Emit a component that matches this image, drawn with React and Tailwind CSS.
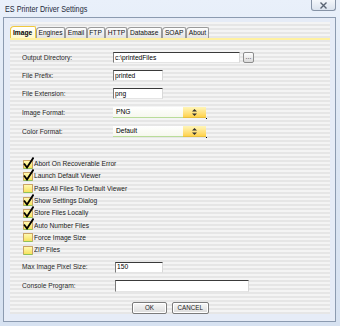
import React from "react";

const tabs = [
  { name: "Image", w: 26 },
  { name: "Engines", w: 29 },
  { name: "Email", w: 22 },
  { name: "FTP", w: 18 },
  { name: "HTTP", w: 22 },
  { name: "Database", w: 35 },
  { name: "SOAP", w: 24 },
  { name: "About", w: 23 },
];

const checks = [
  { label: "Abort On Recoverable Error", on: true },
  { label: "Launch Default Viewer", on: true },
  { label: "Pass All Files To Default Viewer", on: false },
  { label: "Show Settings Dialog", on: true },
  { label: "Store Files Locally", on: true },
  { label: "Auto Number Files", on: true },
  { label: "Force Image Size", on: false },
  { label: "ZIP Files", on: false },
];

// the screenshot is squeezed horizontally, so text is narrowed a bit
const T = ({ children, center }) => (
  <span className={`inline-block whitespace-nowrap scale-x-[0.83] ${center ? "origin-center" : "origin-left"}`}>
    {children}
  </span>
);

const TextBox = ({ value, className }) => (
  <div
    className={`h-[11px] bg-white border-t border-l border-t-[#3a3a3a] border-l-[#7a7a7a] border-r border-b border-r-[#d8d8d8] border-b-[#e4e4e4] flex items-center pl-[1px] text-[8px] text-black leading-none overflow-hidden ${className}`}
  >
    <T>{value}</T>
  </div>
);

const Select = ({ value }) => (
  <div className="h-[11px] w-[93px] flex relative">
    <div className="flex-1 bg-gradient-to-b from-white to-[#f6f8ee] border-b border-b-[#b9dc9a] flex items-center pl-[3px] text-[8px] leading-none text-black">
      <T>{value}</T>
    </div>
    <div className="w-[23px] bg-gradient-to-b from-[#fff6b8] to-[#ffd24a] border-b border-b-[#e8c040] flex items-center justify-center">
      <svg width="5" height="7" viewBox="0 0 5 7">
        <path d="M2.5 0 L5 2.6 L0 2.6 Z M2.5 7 L5 4.4 L0 4.4 Z" fill="#333" />
      </svg>
    </div>
    <div className="absolute right-[-1px] bottom-[-1px] w-[1.5px] h-[1.5px] bg-black" />
  </div>
);

const CheckBox = ({ on }) => (
  <div className="relative w-[10px] h-[9px] shrink-0">
    <div className="absolute inset-0 bg-gradient-to-b from-[#fff9b0] to-[#f7e25a] border border-[#c9a266] border-b-[#8fc25a] rounded-[1px]" />
    {on && (
      <svg className="absolute left-[0px] top-[-3px]" width="11" height="12" viewBox="0 0 11 12">
        <path d="M1 6.5 L4 10.5 L10.5 0.5" fill="none" stroke="#000" strokeWidth="1.8" strokeLinejoin="miter" />
      </svg>
    )}
  </div>
);

const Button = ({ children, w }) => (
  <div
    className={`h-[12px] ${w} rounded-[2px] border border-[#7b7b7b] bg-gradient-to-b from-[#f8f8f8] to-[#dcdcdc] shadow-[inset_0_0_0_1px_#ffffff] flex items-center justify-center text-[7.5px] leading-none text-[#222]`}
  >
    <T center>{children}</T>
  </div>
);

export default function App() {
  return (
    <div className="w-[340px] h-[326px] overflow-hidden bg-gradient-to-b from-[#e9f0fa] via-[#dbe5f3] to-[#d7e2f1] font-['Liberation_Sans',Arial,sans-serif] flex flex-col">
      {/* title bar */}
      <div className="h-[17px] flex items-start justify-between shrink-0">
        <div className="pl-[5px] pt-[4px] text-[9.5px] leading-none text-[#1e2a3a]">
          <span className="inline-block whitespace-nowrap origin-left scale-x-[0.76]">ES Printer Driver Settings</span>
        </div>
        <div className="mr-[4px] w-[25px] h-[11px] rounded-b-[3px] border border-t-0 border-[#8693a6] bg-gradient-to-b from-[#f4f7fb] to-[#dbe3ee] flex items-center justify-center">
          <svg width="9" height="7" viewBox="0 0 9 7">
            <path d="M1.5 0.5 L7.5 6.5 M7.5 0.5 L1.5 6.5" stroke="#5a6472" strokeWidth="1.4" />
          </svg>
        </div>
      </div>

      {/* client area */}
      <div className="mx-[3px] w-[333px] h-[305px] border border-[#8c9bb0] bg-[#e6ecf7] pl-[6px] pt-[4px] pr-[4px] pb-[7px] flex shrink-0">
        <div className="w-[320px] h-[292px] bg-[image:repeating-linear-gradient(to_bottom,#f4f4f4_0px,#f4f4f4_2.5px,#e6e6e6_2.5px,#e6e6e6_4px)] flex flex-col">
          {/* tabs */}
          <div className="mt-[5px] h-[11px] flex items-end">
            {tabs.map((t, i) =>
              i === 0 ? (
                <div
                  key={t.name}
                  style={{ width: t.w }}
                  className="h-[12px] rounded-tl-[4px] rounded-tr-[2px] border border-b-0 border-[#f0c83c] bg-gradient-to-b from-white to-[#fff8cc] flex items-center justify-center text-[8px] font-bold leading-none text-black"
                >
                  <T center>{t.name}</T>
                </div>
              ) : (
                <div
                  key={t.name}
                  style={{ width: t.w }}
                  className="h-[11px] rounded-tl-[4px] rounded-tr-[2px] border border-b-0 border-[#9a9a9a] bg-gradient-to-b from-[#fdfdfd] to-[#e2e2e2] flex items-center justify-center text-[8px] leading-none text-[#111]"
                >
                  <T center>{t.name}</T>
                </div>
              )
            )}
          </div>
          <div className="h-[2px] bg-[#fff1a0]" />

          {/* form */}
          <div className="ml-[12px] flex flex-col text-[8px] leading-none text-[#2a2a2a]">
            <div className="mt-[12px] h-[11px] flex items-center">
              <div className="w-[91px]"><T>Output Directory:</T></div>
              <TextBox value="c:\printedFiles" className="w-[127px]" />
              <div className="ml-[3px] w-[11px] h-[11px] rounded-[2px] border border-[#8d8d8d] bg-gradient-to-b from-white to-[#dadada] flex items-end justify-center pb-[2px] text-[7px] leading-none text-[#333]">
                ...
              </div>
            </div>
            <div className="mt-[7px] h-[11px] flex items-center">
              <div className="w-[91px]"><T>File Prefix:</T></div>
              <TextBox value="printed" className="w-[50px]" />
            </div>
            <div className="mt-[7px] h-[11px] flex items-center">
              <div className="w-[91px]"><T>File Extension:</T></div>
              <TextBox value="png" className="w-[50px]" />
            </div>
            <div className="mt-[8px] h-[11px] flex items-center">
              <div className="w-[91px]"><T>Image Format:</T></div>
              <Select value="PNG" />
            </div>
            <div className="mt-[8px] h-[11px] flex items-center">
              <div className="w-[91px]"><T>Color Format:</T></div>
              <Select value="Default" />
            </div>

            <div className="mt-[21px] flex flex-col">
              {checks.map((c) => (
                <div key={c.label} className="h-[12.3px] flex items-center pl-[1px]">
                  <CheckBox on={c.on} />
                  <span className="ml-[1px] text-[#222]"><T>{c.label}</T></span>
                </div>
              ))}
            </div>

            <div className="mt-[5.6px] h-[11px] flex items-center">
              <div className="w-[93px]"><T>Max Image Pixel Size:</T></div>
              <TextBox value="150" className="w-[48px]" />
            </div>
            <div className="mt-[7px] h-[12px] flex items-center">
              <div className="w-[93px]"><T>Console Program:</T></div>
              <TextBox value="" className="w-[134px] h-[12px]" />
            </div>

            <div className="mt-[10px] flex items-center pl-[110px] gap-[5px]">
              <Button w="w-[35px]">OK</Button>
              <Button w="w-[37px]">CANCEL</Button>
            </div>
          </div>
        </div>
      </div>
    </div>
  );
}
